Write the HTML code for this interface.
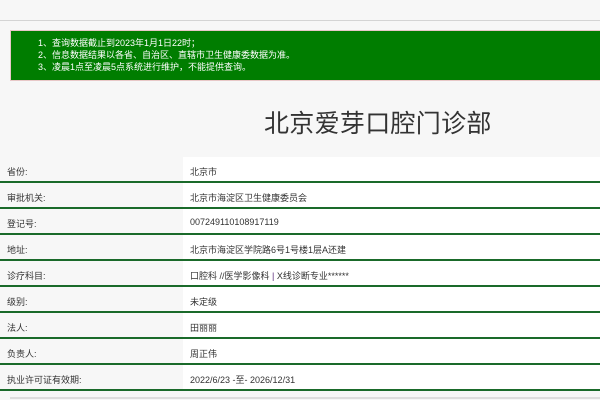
<!DOCTYPE html><html><head><meta charset="utf-8"><style>
body{margin:0;width:600px;height:400px;background:#f7f7f7;font-family:"Liberation Sans","Noto Sans CJK SC",sans-serif;position:relative;overflow:hidden}
.top{position:absolute;left:0;top:0;width:600px;height:20px;border-bottom:1px solid #d4d4d4;background:#f7f7f7}
.g{position:absolute;left:10px;top:30px;width:590px;height:51px;background:#007d00;border:1px solid #e8c8c8;border-right:none;color:#fff;font-size:9px;line-height:12px;box-sizing:border-box;padding:6px 0 0 27px}
.t{position:absolute;left:264px;top:104px;font-size:25px;color:#333;letter-spacing:0.3px}
.row{position:absolute;left:0;width:600px;height:26px;border-bottom:2px solid #1a6a2a;box-sizing:border-box;font-size:9px;color:#333}
.row .l{position:absolute;left:7px;top:8px}
.row .v{position:absolute;left:183px;top:0;right:0;bottom:0;background:#fff;padding:8px 0 0 7px}
.bl{position:absolute;left:10px;top:397px;width:590px;height:2px;background:#ddd}
</style></head><body>
<div class="top"></div>
<div class="g">1、查询数据截止到2023年1月1日22时；<br>2、信息数据结果以各省、自治区、直辖市卫生健康委数据为准。<br>3、凌晨1点至凌晨5点系统进行维护，不能提供查询。</div>
<div class="t">北京爱芽口腔门诊部</div>
<div class="row" style="top:157px;height:26px"><span class="l">省份:</span><div class="v">北京市</div></div>
<div class="row" style="top:183px"><span class="l">审批机关:</span><div class="v">北京市海淀区卫生健康委员会</div></div>
<div class="row" style="top:209px"><span class="l">登记号:</span><div class="v">007249110108917119</div></div>
<div class="row" style="top:235px"><span class="l">地址:</span><div class="v">北京市海淀区学院路6号1号楼1层A还建</div></div>
<div class="row" style="top:261px"><span class="l">诊疗科目:</span><div class="v">口腔科 //医学影像科 <span style="color:#5a2a7a">|</span> X线诊断专业******</div></div>
<div class="row" style="top:287px"><span class="l">级别:</span><div class="v">未定级</div></div>
<div class="row" style="top:313px"><span class="l">法人:</span><div class="v">田丽丽</div></div>
<div class="row" style="top:339px"><span class="l">负责人:</span><div class="v">周正伟</div></div>
<div class="row" style="top:365px"><span class="l">执业许可证有效期:</span><div class="v">2022/6/23 -至- 2026/12/31</div></div>
<div class="bl"></div>
</body></html>
